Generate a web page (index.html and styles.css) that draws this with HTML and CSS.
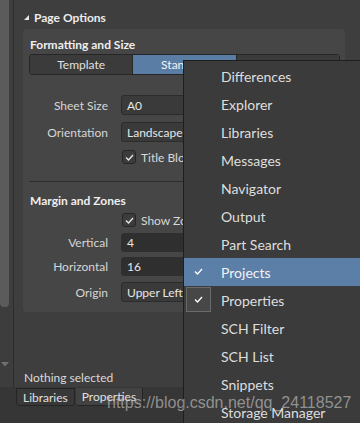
FILE: index.html
```html
<!DOCTYPE html>
<html>
<head>
<meta charset="utf-8">
<link rel="stylesheet" href="styles.css">
</head>
<body>
<div class="app">
  <div class="main">
    <div class="scroll">
      <div class="thumb"></div>
      <svg class="arrow" width="8" height="5" viewBox="0 0 8 5"><polygon points="0,0 8,0 4,4.5" fill="#707070"/></svg>
    </div>
    <div class="panel">
      <div class="head">
        <svg class="tri" width="5" height="5" viewBox="0 0 5 5"><polygon points="5,0 5,5 0,5" fill="#e6e6e6"/></svg>
        <span>Page Options</span>
      </div>
      <div class="group">
        <div class="gtitle">Formatting and Size</div>
        <div class="seg">
          <div class="segbtn">Template</div>
          <div class="segbtn on">Standard</div>
          <div class="segbtn"></div>
        </div>
        <div class="row r1"><span class="lbl">Sheet Size</span><div class="field dd">A0</div></div>
        <div class="row r2"><span class="lbl">Orientation</span><div class="field dd">Landscape</div></div>
        <div class="row r3"><span class="lbl"></span><div class="chk"><span class="box"><svg width="9" height="7" viewBox="0 0 9 7"><polyline points="1,3.5 3.5,6 8,1" fill="none" stroke="#e8e8e8" stroke-width="1.3"/></svg></span><span>Title Block</span></div></div>
        <div class="sep"></div>
        <div class="gtitle g2">Margin and Zones</div>
        <div class="row r4"><span class="lbl"></span><div class="chk"><span class="box"><svg width="9" height="7" viewBox="0 0 9 7"><polyline points="1,3.5 3.5,6 8,1" fill="none" stroke="#e8e8e8" stroke-width="1.3"/></svg></span><span>Show Zones</span></div></div>
        <div class="row r5"><span class="lbl">Vertical</span><div class="field txt">4</div></div>
        <div class="row r6"><span class="lbl">Horizontal</span><div class="field txt">16</div></div>
        <div class="row r7"><span class="lbl">Origin</span><div class="field dd">Upper Left</div></div>
      </div>
      <div class="spacer"></div>
      <div class="status">Nothing selected</div>
    </div>
  </div>
  <div class="tabs">
    <div class="tab">Libraries</div>
    <div class="tab on">Properties</div>
  </div>
</div>

<div class="menu">
  <div class="item">Differences</div>
  <div class="item">Explorer</div>
  <div class="item">Libraries</div>
  <div class="item">Messages</div>
  <div class="item">Navigator</div>
  <div class="item">Output</div>
  <div class="item">Part Search</div>
  <div class="item sel"><span class="mark"><svg width="9" height="7" viewBox="0 0 9 7"><polyline points="1,3.5 3.5,6 8,1" fill="none" stroke="#ffffff" stroke-width="1.3"/></svg></span>Projects</div>
  <div class="item checked"><span class="mark frame"><svg width="9" height="7" viewBox="0 0 9 7"><polyline points="1,3.5 3.5,6 8,1" fill="none" stroke="#ffffff" stroke-width="1.3"/></svg></span>Properties</div>
  <div class="item">SCH Filter</div>
  <div class="item">SCH List</div>
  <div class="item">Snippets</div>
  <div class="item">Storage Manager</div>
</div>

<div class="watermark">https://blog.csdn.net/qq_24118527</div>
</body>
</html>
```

FILE: styles.css
```css
* { box-sizing: border-box; }
html, body {
  margin: 0;
  padding: 0;
}
body {
  width: 360px;
  height: 423px;
  overflow: hidden;
  position: relative;
  background: #3c3c3c;
  font-family: Lato, "Open Sans", sans-serif;
  font-size: 12px;
  color: #d8d8d8;
}
.app {
  display: flex;
  flex-direction: column;
  height: 423px;
}
.main {
  display: flex;
  height: 387px;
}
.scroll {
  width: 14px;
  border-right: 1px solid #2c2c2c;
  background: #3d3d3d;
  display: flex;
  flex-direction: column;
}
.thumb {
  width: 9px;
  height: 307px;
  background: #5b5b5b;
  border-radius: 0 0 4px 4px;
}
.arrow {
  display: block;
  margin: 55px 0 0 1px;
}
.panel {
  flex: 1;
  display: flex;
  flex-direction: column;
  padding: 9px 15px 1px 9px;
  background: #3e3e3e;
}
.head {
  display: flex;
  align-items: center;
  height: 16px;
  font-weight: bold;
  font-size: 12px;
  color: #ececec;
}
.tri {
  display: block;
  margin: 1px 5px 0 1px;
}
.group {
  margin-top: 4px;
  background: #464646;
  border-radius: 4px;
  padding: 8px 5px 10px 6px;
}
.gtitle {
  line-height: 16px;
  height: 16px;
  font-weight: bold;
  color: #efefef;
  padding-left: 1px;
}
.seg {
  margin-top: 1px;
  display: flex;
  height: 21px;
  border: 1px solid #262626;
  border-radius: 3px;
  overflow: hidden;
}
.segbtn {
  flex: 1;
  display: flex;
  align-items: center;
  justify-content: center;
  background: #3b3b3b;
  color: #e2e2e2;
}
.segbtn + .segbtn { border-left: 1px solid #262626; }
.segbtn.on { background: #5a7da6; color: #f4f4f4; }
.row {
  display: grid;
  grid-template-columns: 79px 1fr;
  column-gap: 13px;
  align-items: center;
  height: 20px;
}
.lbl {
  text-align: right;
  color: #d6d6d6;
}
.r1 { margin-top: 20px; }
.r2 { margin-top: 7px; }
.r3 { margin-top: 5px; }
.sep {
  margin-top: 14px;
  height: 1px;
  background: #2c2c2c;
}
.g2 { margin-top: 11px; }
.r4 { margin-top: 1px; }
.r5 { margin-top: 3px; height: 19px; }
.r6 { margin-top: 5px; height: 19px; }
.r7 { margin-top: 6px; }
.field {
  height: 20px;
  border: 1px solid #2b2b2b;
  border-radius: 3px;
  background: #3a3a3a;
  padding-left: 5px;
  display: flex;
  align-items: center;
  color: #e6e6e6;
}
.field.txt {
  height: 19px;
  background: #2f2f2f;
  border-color: #2f2f2f;
}
.chk {
  display: flex;
  align-items: center;
  gap: 5px;
  padding-left: 1px;
  color: #d8d8d8;
}
.box {
  width: 14px;
  height: 14px;
  border: 1px solid #262626;
  border-radius: 3px;
  background: #3c3c3c;
  display: flex;
  align-items: center;
  justify-content: center;
}
.box svg { display: block; }
.spacer { flex: 1; }
.status {
  line-height: 16px;
  height: 16px;
  padding-left: 1px;
  color: #dadada;
}
.tabs {
  height: 36px;
  background: #363636;
  display: flex;
  align-items: flex-start;
  padding: 1px 0 0 16px;
}
.tab {
  height: 18px;
  padding: 0 6px;
  border: 1px solid #252525;
  background: #383838;
  display: flex;
  align-items: center;
  color: #e0e0e0;
  border-radius: 0 0 3px 3px;
}
.tab.on {
  background: #424242;
  border-top: none;
  border-left: none;
  margin-left: 1px;
}
.menu {
  position: absolute;
  left: 183px;
  top: 60px;
  width: 177px;
  height: 363px;
  background: #3b3b3b;
  border: 1px solid #1e1e1e;
  border-right: none;
  border-bottom: none;
  padding-top: 1px;
  font-size: 14px;
  color: #dedede;
  overflow: hidden;
}
.item {
  position: relative;
  height: 28px;
  display: flex;
  align-items: center;
  padding-left: 37px;
  white-space: nowrap;
}
.item.sel {
  background: #5b7fa7;
  color: #f2f2f2;
}
.mark {
  position: absolute;
  left: 2px;
  top: 1px;
  width: 25px;
  height: 25px;
  display: flex;
  align-items: center;
  justify-content: center;
}
.mark.frame {
  border: 1px solid #6a6a6a;
  background: #474747;
}
.mark svg { display: block; }
.watermark {
  position: absolute;
  left: 107px;
  top: 395px;
  line-height: 16px;
  font-family: "Liberation Sans", Arial, sans-serif;
  font-size: 16px;
  color: rgba(205, 205, 205, 0.6);
  white-space: nowrap;
}
```
